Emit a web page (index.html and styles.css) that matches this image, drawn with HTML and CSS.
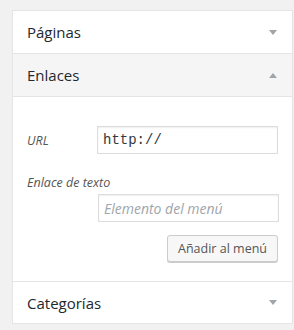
FILE: index.html
```html
<!DOCTYPE html>
<html lang="es">
<head>
    <meta charset="UTF-8">
    <meta name="viewport" content="width=device-width, initial-scale=1.0">
    <title>Menús</title>
    <link rel="stylesheet" href="styles.css">
</head>
<body>
    <div class="accordion">
        <div class="section">
            <h3 class="section-title">Páginas <span class="arrow down"></span></h3>
        </div>
        <div class="section open">
            <h3 class="section-title">Enlaces <span class="arrow up"></span></h3>
            <div class="section-content">
                <div class="field-row">
                    <label for="url">URL</label>
                    <input type="text" id="url" class="url-input" value="http://">
                </div>
                <div class="field-block">
                    <label for="linktext">Enlace de texto</label>
                    <input type="text" id="linktext" class="text-input" placeholder="Elemento del menú">
                </div>
                <div class="actions">
                    <button class="button">Añadir al menú</button>
                </div>
            </div>
        </div>
        <div class="section">
            <h3 class="section-title">Categorías <span class="arrow down"></span></h3>
        </div>
    </div>
</body>
</html>
```

FILE: styles.css
```css
body {
    margin: 0;
    padding: 10px 0 0 12px;
    background: #f1f1f1;
    font-family: "Open Sans", sans-serif;
    color: #23282d;
}
.accordion {
    width: 279px;
    background: #fff;
    border: 1px solid #e5e5e5;
    box-shadow: 0 1px 1px rgba(0, 0, 0, 0.04);
}
.section {
    border-bottom: 1px solid #e5e5e5;
}
.section:last-child {
    border-bottom: none;
}
.section-title {
    margin: 0;
    height: 42px;
    padding: 0 15px 0 14px;
    display: flex;
    align-items: center;
    justify-content: space-between;
    font-size: 15px;
    font-weight: 400;
    color: #23282d;
}
.section:last-child .section-title {
    height: 41px;
}
.open .section-title {
    background: #f5f5f5;
    border-bottom: 1px solid #e5e5e5;
}
.arrow {
    width: 0;
    height: 0;
    border-left: 4px solid transparent;
    border-right: 4px solid transparent;
}
.arrow.down {
    border-top: 5px solid #a0a5aa;
}
.arrow.up {
    border-bottom: 5px solid #a0a5aa;
}
.section-content {
    padding: 29px 14px 19px 14px;
}
.field-row {
    display: flex;
    align-items: center;
}
.field-row label {
    width: 71px;
}
label {
    font-size: 12.5px;
    font-style: italic;
    color: #555;
}
input {
    box-sizing: border-box;
    width: 181px;
    height: 28px;
    margin: 0;
    border: 1px solid #ddd;
    box-shadow: inset 0 1px 2px rgba(0, 0, 0, 0.07);
    padding: 3px 5px;
    background: #fff;
    outline: none;
}
.url-input {
    font-family: "Liberation Mono", monospace;
    font-size: 14px;
    color: #32373c;
}
.text-input {
    font-family: "Open Sans", sans-serif;
    font-size: 14px;
}
.text-input::placeholder {
    color: #a0a5aa;
    font-style: italic;
}
.field-block {
    margin-top: 20px;
}
.field-block label {
    display: block;
    line-height: 18px;
    margin-bottom: 2px;
}
.field-block input {
    margin-left: 71px;
}
.actions {
    display: flex;
    justify-content: flex-end;
    margin-top: 13px;
}
.button {
    height: 27px;
    padding: 0 10px;
    font-family: "Open Sans", sans-serif;
    font-size: 12.5px;
    color: #555;
    background: #f7f7f7;
    border: 1px solid #ccc;
    border-radius: 3px;
    box-shadow: 0 1px 0 #ccc;
    cursor: pointer;
}
```
